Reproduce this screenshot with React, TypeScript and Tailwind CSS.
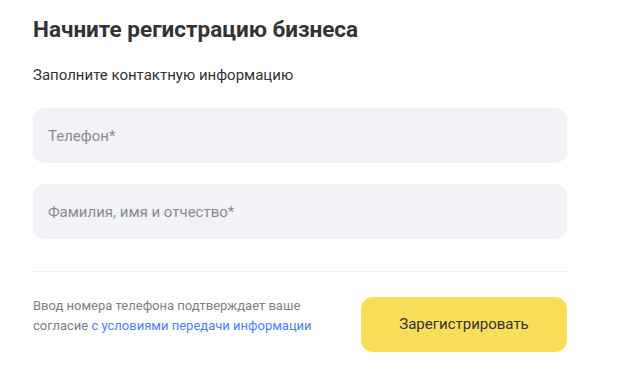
const App = () => {
  return (
    <div className="min-h-screen bg-white font-['Roboto',sans-serif]">
      <div className="w-[534px] ml-[33px] pt-[14px]">
        <h1 className="text-[22.5px] leading-[30px] font-bold text-[#333333]">
          Начните регистрацию бизнеса
        </h1>
        <p className="mt-[21px] text-[15px] leading-[20px] text-[#333333]">
          Заполните контактную информацию
        </p>

        <div className="mt-[23px] flex flex-col gap-[21px]">
          <input
            type="text"
            placeholder="Телефон*"
            className="h-[55px] w-full rounded-[12px] bg-[#f2f3f7] px-[15px] text-[15px] text-[#333333] placeholder:text-[#8b8b8f] outline-none"
          />
          <input
            type="text"
            placeholder="Фамилия, имя и отчество*"
            className="h-[55px] w-full rounded-[12px] bg-[#f2f3f7] px-[15px] text-[15px] text-[#333333] placeholder:text-[#8b8b8f] outline-none"
          />
        </div>

        <div className="mt-[32px] border-t border-[#eeeff2]" />

        <div className="mt-[24px] flex items-start justify-between">
          <p className="w-[290px] text-[13px] leading-[20px] text-[#808080]">
            Ввод номера телефона подтверждает ваше
            <br />
            согласие{" "}
            <a href="#" className="text-[#4a7dff]">
              с условиями передачи информации
            </a>
          </p>
          <button className="mt-[1px] h-[55px] w-[206px] rounded-[12px] bg-[#f9de59] text-[15px] text-[#333333]">
            Зарегистрировать
          </button>
        </div>
      </div>
    </div>
  );
};

export default App;
